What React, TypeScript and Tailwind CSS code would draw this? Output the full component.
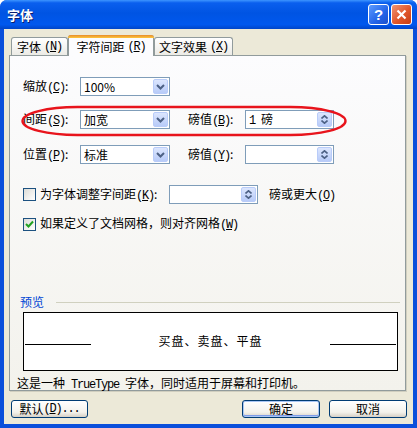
import React from "react";

const mono = "font-['Liberation_Mono',monospace] text-[12px] tracking-[-1.2px]";

function Acc({ k }: { k: string }) {
  return (
    <span className={mono}>
      (<span className="underline">{k}</span>)
    </span>
  );
}

function Chevron() {
  return (
    <svg width="9" height="6" viewBox="0 0 9 6">
      <path d="M1 1 L4.5 4.5 L8 1" fill="none" stroke="#4D6185" strokeWidth="2" />
    </svg>
  );
}

function Combo({ value, w }: { value: string; w: string }) {
  return (
    <div className={`${w} h-[19px] border border-[#7F9DB9] bg-white flex items-center`}>
      <span className="flex-1 pl-[3px] text-[12px] leading-[14px]">{value}</span>
      <div className="w-[15px] h-[15px] mr-[1px] rounded-[2px] border border-[#B9CCF9] bg-[linear-gradient(180deg,#DCE6FE,#B8CBF8)] flex items-center justify-center">
        <Chevron />
      </div>
    </div>
  );
}

function Spin({ value, w }: { value?: React.ReactNode; w: string }) {
  return (
    <div className={`${w} h-[19px] border border-[#7F9DB9] bg-white flex items-center`}>
      <span className="flex-1 pl-[3px] text-[12px] leading-[14px] whitespace-pre">{value}</span>
      <div className="w-[15px] h-[15px] mr-[1px] rounded-[2px] border border-[#B9CCF9] bg-[linear-gradient(180deg,#DCE6FE,#B8CBF8)] flex flex-col items-center justify-center gap-[1px]">
        <svg width="7" height="4" viewBox="0 0 7 4">
          <path d="M0.5 3.5 L3.5 0.8 L6.5 3.5" fill="none" stroke="#4D6185" strokeWidth="1.6" />
        </svg>
        <svg width="7" height="4" viewBox="0 0 7 4">
          <path d="M0.5 0.5 L3.5 3.2 L6.5 0.5" fill="none" stroke="#4D6185" strokeWidth="1.6" />
        </svg>
      </div>
    </div>
  );
}

function Check({ checked }: { checked?: boolean }) {
  return (
    <div className="w-[13px] h-[13px] border border-[#1C5180] bg-[linear-gradient(135deg,#DCDCD7,#FFFFFF)] flex items-center justify-center">
      {checked && (
        <svg width="9" height="9" viewBox="0 0 9 9">
          <path d="M1 4 L3.5 6.5 L8 1.5" fill="none" stroke="#21A121" strokeWidth="2" />
        </svg>
      )}
    </div>
  );
}

function Tab({ label, k, active, w }: { label: string; k: string; active?: boolean; w: string }) {
  if (active) {
    return (
      <div className={`${w} h-[21px] -mb-px relative z-10 border border-[#919B9C] border-b-0 rounded-t-[3px] bg-[#FCFCFE] flex flex-col`}>
        <div className="h-[3px] -mx-px -mt-px rounded-t-[3px] bg-[linear-gradient(180deg,#E68B2C,#FFC83C)]" />
        <div className="flex-1 flex items-center justify-center text-[12px] leading-[14px]">
          {label}
          <span className="w-[3px]" />
          <Acc k={k} />
        </div>
      </div>
    );
  }
  return (
    <div className={`${w} h-[18px] border border-[#919B9C] border-b-0 rounded-t-[3px] bg-[linear-gradient(180deg,#FFFFFF,#ECEBE6)] flex items-center justify-center text-[12px] leading-[14px] pt-[1px]`}>
      {label}
      <span className="w-[3px]" />
      <Acc k={k} />
    </div>
  );
}

function Button({ children, def, w }: { children: React.ReactNode; def?: boolean; w: string }) {
  return (
    <div
      className={`${w} h-[18px] rounded-[3px] border border-[#003C74] flex items-center justify-center text-[12px] leading-[14px] bg-[linear-gradient(180deg,#FFFFFF,#F3F2EC_70%,#D6D0C5)] ${
        def ? "shadow-[inset_0_0_0_1px_#A9C6F4,inset_0_-1px_0_1px_#7E9CE8]" : ""
      }`}
    >
      {children}
    </div>
  );
}

export default function App() {
  return (
    <div className="w-[417px] h-[428px] bg-white font-['Noto_Sans_CJK_SC',sans-serif] text-black">
      <div className="w-[417px] h-[428px] flex flex-col rounded-t-[7px] overflow-hidden bg-[#0A4FDB]">
        {/* title bar */}
        <div className="h-[29px] flex items-center pl-[7px] pr-[5px] bg-[linear-gradient(180deg,#3D95FF_0%,#0A5FEE_10%,#0054E3_45%,#0058EE_85%,#0045C8_100%)]">
          <span className="text-[13px] font-bold text-white leading-[16px] [text-shadow:1px_1px_0_#0A1E6E]">字体</span>
          <div className="ml-auto flex gap-[2px]">
            <div className="w-[21px] h-[21px] rounded-[3px] border border-white bg-[linear-gradient(135deg,#5C9BFF,#2364E8_60%,#1A50CC)] flex items-center justify-center text-white font-bold text-[15px] leading-none font-['Liberation_Sans',sans-serif]">
              ?
            </div>
            <div className="w-[21px] h-[21px] rounded-[3px] border border-white bg-[linear-gradient(135deg,#F09574,#E0572B_55%,#C63D14)] flex items-center justify-center">
              <svg width="11" height="11" viewBox="0 0 11 11">
                <path d="M1.5 1.5 L9.5 9.5 M9.5 1.5 L1.5 9.5" stroke="white" strokeWidth="2.2" />
              </svg>
            </div>
          </div>
        </div>

        {/* client */}
        <div className="h-[395px] mx-[4px] bg-[#ECE9D8] pt-[6px] px-[5px] flex flex-col">
          <div className="h-[20px] flex items-end pl-[2px]">
            <Tab label="字体" k="N" w="w-[57px]" />
            <Tab label="字符间距" k="R" w="w-[86px]" active />
            <Tab label="文字效果" k="X" w="w-[79px]" />
          </div>

          <div className="relative h-[336px] w-[397px] border border-[#919B9C] bg-[linear-gradient(180deg,#FCFCFE,#F3F2EC)] shadow-[1px_1px_0_#D0CEBF] flex flex-col text-[12px] leading-[14px]">
            <div className="flex items-center mt-[21px] pl-[13px] h-[19px]">
              <span className="w-[57px]">缩放<Acc k="C" />:</span>
              <Combo value="100%" w="w-[90px]" />
            </div>
            <div className="flex items-center mt-[14px] pl-[13px] h-[19px]">
              <span className="w-[57px]">间距<Acc k="S" />:</span>
              <Combo value="加宽" w="w-[90px]" />
              <span className="w-[57px] ml-[18px]">磅值<Acc k="B" />:</span>
              <Spin
                value={
                  <>
                    <span className={mono}>1 </span>磅
                  </>
                }
                w="w-[89px]"
              />
            </div>
            <div className="flex items-center mt-[16px] pl-[13px] h-[19px]">
              <span className="w-[57px]">位置<Acc k="P" />:</span>
              <Combo value="标准" w="w-[90px]" />
              <span className="w-[57px] ml-[18px]">磅值<Acc k="Y" />:</span>
              <Spin w="w-[89px]" />
            </div>

            <div className="flex items-center mt-[21px] pl-[13px] h-[19px]">
              <Check />
              <span className="w-[133px] pl-[4px]">为字体调整字间距<Acc k="K" />:</span>
              <Spin w="w-[89px]" />
              <span className="ml-[11px]">磅或更大<Acc k="O" /></span>
            </div>
            <div className="flex items-center mt-[13px] pl-[13px] h-[14px]">
              <Check checked />
              <span className="pl-[4px]">如果定义了文档网格，则对齐网格<Acc k="W" /></span>
            </div>

            <div className="flex items-center mt-[64px] pl-[10px] pr-[5px] h-[14px]">
              <span className="text-[#0046D5]">预览</span>
              <div className="flex-1 h-px bg-[#D0D0BF] ml-[12px]" />
            </div>
            <div className="ml-[13px] mt-[3px] w-[375px] h-[59px] border border-black bg-white">
              <div className="flex items-start mt-[21px] px-[1px]">
                <div className="w-[66px] h-px bg-black mt-[10px]" />
                <span className="flex-1 text-center tracking-[1px]">买盘、卖盘、平盘</span>
                <div className="w-[66px] h-px bg-black mt-[10px]" />
              </div>
            </div>
            <div className="mt-[5px] pl-[7px] h-[14px] whitespace-pre">
              这是一种<span className={mono}> TrueType </span>字体，同时适用于屏幕和打印机。
            </div>

            <svg className="absolute left-[11px] top-[49px]" width="326" height="32" viewBox="0 0 326 32">
              <rect x="1.5" y="2" width="323" height="28" rx="55" ry="14" fill="none" stroke="#E8141C" strokeWidth="2.4" />
            </svg>
          </div>

          <div className="flex mt-[9px] pl-[2px]">
            <Button w="w-[77px]">
              默认<Acc k="D" /><span className={mono}>...</span>
            </Button>
            <div className="ml-auto flex gap-[9px] pr-px">
              <Button w="w-[78px]" def>确定</Button>
              <Button w="w-[78px]">取消</Button>
            </div>
          </div>
        </div>
      </div>
    </div>
  );
}
